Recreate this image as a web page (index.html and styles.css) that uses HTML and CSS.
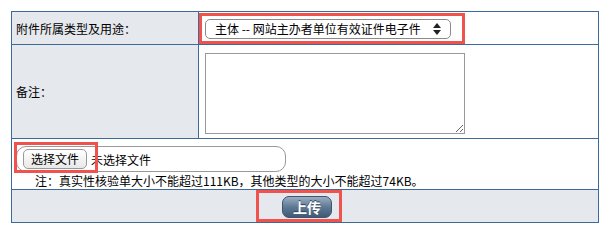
FILE: index.html
```
<!DOCTYPE html>
<html lang="zh-cn">
<head>
    <meta charset="UTF-8">
    <title>上传附件</title>
    <link rel="stylesheet" href="styles.css">
</head>
<body>
    <table class="form">
        <tr class="row-type">
            <td class="label">附件所属类型及用途：</td>
            <td class="field">
                <span class="select">
                    <span class="select-text">主体 -- 网站主办者单位有效证件电子件</span>
                    <svg class="arrows" width="8" height="12" viewBox="0 0 8 12">
                        <path d="M4 0 L8 5 L0 5 Z" fill="#222"/>
                        <path d="M0 7 L8 7 L4 12 Z" fill="#222"/>
                    </svg>
                </span>
                <span class="mark mark-select"></span>
            </td>
        </tr>
        <tr class="row-note">
            <td class="label">备注：</td>
            <td class="field">
                <textarea class="remark"></textarea>
            </td>
        </tr>
        <tr class="row-file">
            <td class="file-cell" colspan="2">
                <div class="file">
                    <span class="file-btn">选择文件</span>
                    <span class="file-name">未选择文件</span>
                </div>
                <div class="hint">注：真实性核验单大小不能超过111KB，其他类型的大小不能超过74KB。</div>
                <span class="mark mark-file"></span>
            </td>
        </tr>
        <tr class="row-submit">
            <td class="submit-cell" colspan="2">
                <button class="upload">上传</button>
                <span class="mark mark-upload"></span>
            </td>
        </tr>
    </table>
</body>
</html>
```

FILE: styles.css
```
body {
    margin: 0;
    padding: 11px 0 0 11px;
    background: #fff;
    font-family: "Noto Sans CJK SC", "DejaVu Sans", sans-serif;
    font-size: 12px;
    color: #000;
}
.form {
    border-collapse: collapse;
    table-layout: fixed;
    width: 588px;
}
.form td {
    border: 1px solid #3d6a97;
    padding: 0;
    position: relative;
}
.label {
    width: 182px;
    background: #e5e8ed;
    padding-left: 4px !important;
    vertical-align: middle;
}
.field {
    vertical-align: top;
    background: #fff;
}
.row-type {
    height: 33px;
}
.row-type .field {
    padding: 7px 0 0 6px;
}
.select {
    display: flex;
    align-items: center;
    box-sizing: border-box;
    width: 246px;
    height: 20px;
    border: 1px solid #8a8a8a;
    border-radius: 5px;
    background: #fff;
    padding: 0 9px;
}
.select-text {
    flex: 1;
    line-height: 18px;
}
.arrows {
    display: block;
}
.row-note {
    height: 94px;
}
.row-note .field {
    padding: 8px 0 0 6px;
}
.remark {
    display: block;
    box-sizing: border-box;
    width: 260px;
    height: 81px;
    margin: 0;
    border: 1px solid #999;
    resize: both;
}
.row-file {
    height: 51px;
}
.file-cell {
    vertical-align: top;
    background: #fff;
    padding: 7px 0 0 4px !important;
}
.file {
    display: flex;
    align-items: center;
    box-sizing: border-box;
    width: 270px;
    height: 26px;
    border: 1px solid #999;
    border-radius: 10px;
    padding-left: 6px;
    gap: 4px;
}
.file-btn {
    box-sizing: border-box;
    height: 20px;
    line-height: 18px;
    padding: 0 7px;
    border: 1px solid #999;
    border-radius: 5px;
    background: linear-gradient(#ffffff, #e8e8e8);
}
.hint {
    margin: 1px 0 0 19px;
    line-height: 16px;
}
.row-submit {
    height: 33px;
}
.submit-cell {
    background: #e5e8ed;
    text-align: center;
    vertical-align: top;
    padding-top: 6px !important;
}
.upload {
    display: block;
    width: 50px;
    height: 22px;
    margin: 0 auto;
    position: relative;
    left: 2px;
    padding: 0;
    border: 1px solid #3c5670;
    border-radius: 7px;
    background: linear-gradient(#9aaec2, #5f7994 50%, #405a76);
    color: #fff;
    font-family: "Noto Sans CJK SC", sans-serif;
    font-size: 14px;
    font-weight: bold;
    line-height: 20px;
    text-shadow: 0 -1px 0 #2d4258;
}
.mark {
    position: absolute;
    box-sizing: border-box;
    border: 3px solid #f0524e;
}
.mark-select {
    left: 0;
    top: 1px;
    width: 266px;
    height: 31px;
}
.mark-file {
    left: 2px;
    top: 3px;
    width: 84px;
    height: 31px;
}
.mark-upload {
    left: 244px;
    top: 0;
    width: 86px;
    height: 32px;
}
```
